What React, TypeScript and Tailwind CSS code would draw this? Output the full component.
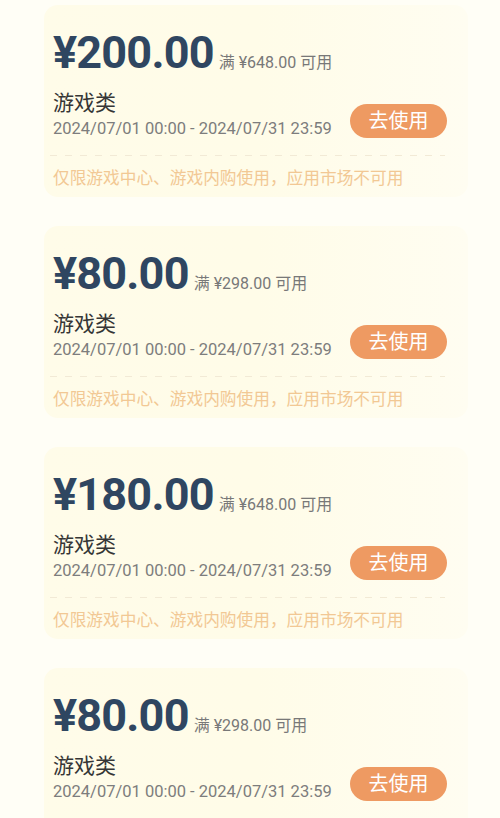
const coupons = [
  { amount: '¥200.00', min: '¥648.00' },
  { amount: '¥80.00', min: '¥298.00' },
  { amount: '¥180.00', min: '¥648.00' },
  { amount: '¥80.00', min: '¥298.00' },
];

function CouponCard({ amount, min }: { amount: string; min: string }) {
  return (
    <div className="ml-[44px] w-[424px] h-[192px] shrink-0 rounded-[14px] bg-gradient-to-r from-[#fffce9] via-[#fffce8] to-[#fffdf1] pl-[9px] pr-[21px] pt-[25px]">
      <div className="flex items-baseline">
        <span className="text-[45px] leading-none font-bold text-[#2f4661] tracking-[-0.8px]">{amount}</span>
        <span className="ml-[5px] text-[16px] text-[#787878]">满 {min} 可用</span>
      </div>
      <div className="mt-[14px] flex items-end justify-between">
        <div>
          <p className="text-[21px] leading-[28px] text-[#363636]">游戏类</p>
          <p className="text-[16.5px] leading-[24px] text-[#7d7d7d]">2024/07/01 00:00 - 2024/07/31 23:59</p>
        </div>
        <button className="mb-[3px] h-[34px] w-[97px] rounded-full bg-[#ee9a62] text-[20px] leading-none text-white">
          去使用
        </button>
      </div>
      <div className="mt-[14px] -ml-[3px] mr-[2px] h-px bg-[repeating-linear-gradient(to_right,#f2ead6_0_7px,transparent_7px_15px)]" />
      <p className="mt-[11px] text-[16.7px] leading-[24px] text-[#f2c894]">仅限游戏中心、游戏内购使用，应用市场不可用</p>
    </div>
  );
}

export default function App() {
  return (
    <div className="h-[818px] w-[500px] overflow-hidden bg-[#fffef6] pt-[5px] font-['Roboto','Noto_Sans_CJK_SC',sans-serif]">
      <div className="flex flex-col gap-[29px]">
        {coupons.map((c, i) => (
          <CouponCard key={i} amount={c.amount} min={c.min} />
        ))}
      </div>
    </div>
  );
}
